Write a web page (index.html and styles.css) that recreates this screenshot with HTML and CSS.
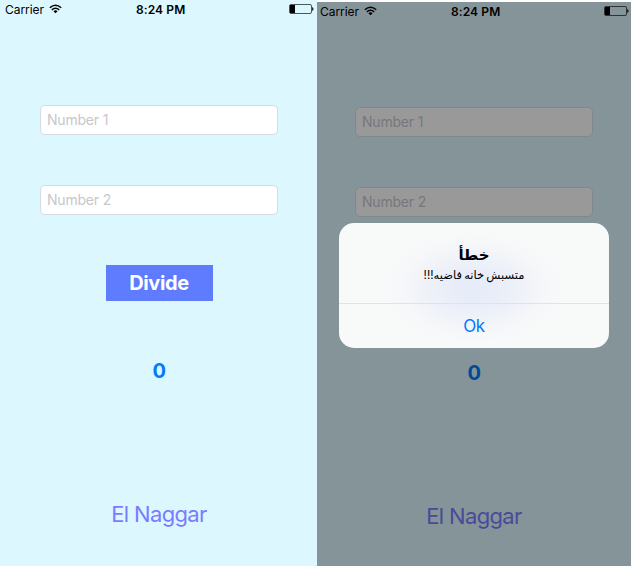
FILE: index.html
```html
<!DOCTYPE html>
<html lang="en">
<head>
<meta charset="utf-8">
<title>Divide</title>
<link rel="stylesheet" href="styles.css">
</head>
<body>
<main class="screens">
  <section class="screen">
    <div class="content">
      <header class="status">
        <span class="carrier">Carrier</span>
        <svg class="wifi" width="13" height="10" viewBox="0 0 13 10"><g fill="none" stroke="#000" stroke-width="1.5"><path d="M.8 3.7Q6.5-1.3 12.2 3.7"/><path d="M2.8 5.9Q6.5 2.6 10.2 5.9"/></g><path d="M4.4 7.2Q6.5 5.4 8.6 7.2L6.5 9.3Z"/></svg>
        <span class="time">8:24 PM</span>
        <svg class="battery" width="26" height="10" viewBox="0 0 26 10"><rect x=".5" y=".5" width="22" height="9" rx="1.5" fill="none" stroke="#000" stroke-opacity=".65"/><path d="M1 1H6V9H1ZM23.2 3Q24.5 3.4 24.5 5T23.2 7Z"/></svg>
      </header>
      <input class="field" placeholder="Number 1" aria-label="Number 1">
      <input class="field" placeholder="Number 2" aria-label="Number 2">
      <button class="divide">Divide</button>
      <output class="result">0</output>
      <footer class="author">El Naggar</footer>
    </div>
  </section>
  <section class="screen dimmed">
    <div class="content">
      <header class="status">
        <span class="carrier">Carrier</span>
        <svg class="wifi" width="13" height="10" viewBox="0 0 13 10"><g fill="none" stroke="#000" stroke-width="1.5"><path d="M.8 3.7Q6.5-1.3 12.2 3.7"/><path d="M2.8 5.9Q6.5 2.6 10.2 5.9"/></g><path d="M4.4 7.2Q6.5 5.4 8.6 7.2L6.5 9.3Z"/></svg>
        <span class="time">8:24 PM</span>
        <svg class="battery" width="26" height="10" viewBox="0 0 26 10"><rect x=".5" y=".5" width="22" height="9" rx="1.5" fill="none" stroke="#000" stroke-opacity=".65"/><path d="M1 1H6V9H1ZM23.2 3Q24.5 3.4 24.5 5T23.2 7Z"/></svg>
      </header>
      <input class="field" placeholder="Number 1" aria-label="Number 1">
      <input class="field" placeholder="Number 2" aria-label="Number 2">
      <div class="divide-space"></div>
      <output class="result">0</output>
      <footer class="author">El Naggar</footer>
    </div>
    <div class="alert" role="alertdialog">
      <div class="alert-body">
        <h2 class="alert-title" dir="rtl" lang="ar">خطأ</h2>
        <p class="alert-message" dir="rtl" lang="ar">متسبش خانه فاضيه!!!</p>
      </div>
      <button class="alert-ok">Ok</button>
    </div>
  </section>
</main>
</body>
</html>
```
FILE: styles.css
```css
* { box-sizing: border-box; }
body { margin: 0; background: #fff; font-family: Inter, "Liberation Sans", sans-serif; overflow: hidden; }
.screens { display: grid; grid-template-columns: 317px 314px; height: 566px; }
.screen { position: relative; background: #ddf7ff; overflow: hidden; }
.content { display: flex; flex-direction: column; align-items: center; width: 318px; }
.status { display: flex; align-items: center; width: 100%; height: 18px; padding-left: 5px; font-size: 12px; line-height: 18px; margin-bottom: 87px; }
.carrier { width: 44px; padding-top: 1px; letter-spacing: -.05px; }
.time { width: 50px; margin-left: 74px; padding-top: 1px; font-weight: 600; letter-spacing: .1px; white-space: nowrap; }
.battery { margin-left: 103px; flex: none; }
.wifi { flex: none; }
.field { width: 238px; height: 30px; margin: 0 0 50px; padding: 0 6px 2px; border: 1px solid #d5dce2; border-radius: 5px; background: #fff; font: 14px Inter, sans-serif; letter-spacing: -.2px; }
.field::placeholder { color: #c7c7cd; opacity: 1; }
.divide, .divide-space { width: 107px; height: 36px; padding: 0; }
.divide { border: 0; background: #5f7cff; color: #fff; font: 700 20px Inter, sans-serif; letter-spacing: -.35px; }
.result { margin-top: 58px; height: 24px; line-height: 24px; font-size: 20px; font-weight: 700; color: #007aff; letter-spacing: -.4px; }
.author { margin-top: 117px; font-size: 22px; line-height: 28px; color: #7b7bff; letter-spacing: -.65px; }
.dimmed { margin-top: 2px; background: #859499; }
.dimmed .content { margin-left: -2px; }
.dimmed .field { background: #999; border-color: #80888b; }
.dimmed .field::placeholder { color: #77777b; }
.dimmed .result { color: #004999; }
.dimmed .author { color: #4a4a99; }
.alert { position: absolute; left: 22px; top: 221px; width: 270px; height: 124.5px; border-radius: 15px; overflow: hidden; text-align: center; background: radial-gradient(ellipse 90px 56px at 50% 52%, #e5ebf9 0%, #e8edf8 25%, #eff2f8 55%, #f6f7f9 80%, #f8f9f9 100%); }
.alert-body { height: 80px; padding-top: 20px; }
.alert-title { margin: 0; font: 700 15px/24px "DejaVu Sans", sans-serif; }
.alert-message { margin: 0; font: 12px/17px Inter, "DejaVu Sans", sans-serif; word-spacing: -1px; font-size: 11.5px; }
.alert-ok { display: block; width: 100%; height: 45px; padding: 0; border: 0; border-top: 1px solid #dfe2e8; background: none; color: #007aff; font: 17px Inter, sans-serif; letter-spacing: -.4px; }
```
